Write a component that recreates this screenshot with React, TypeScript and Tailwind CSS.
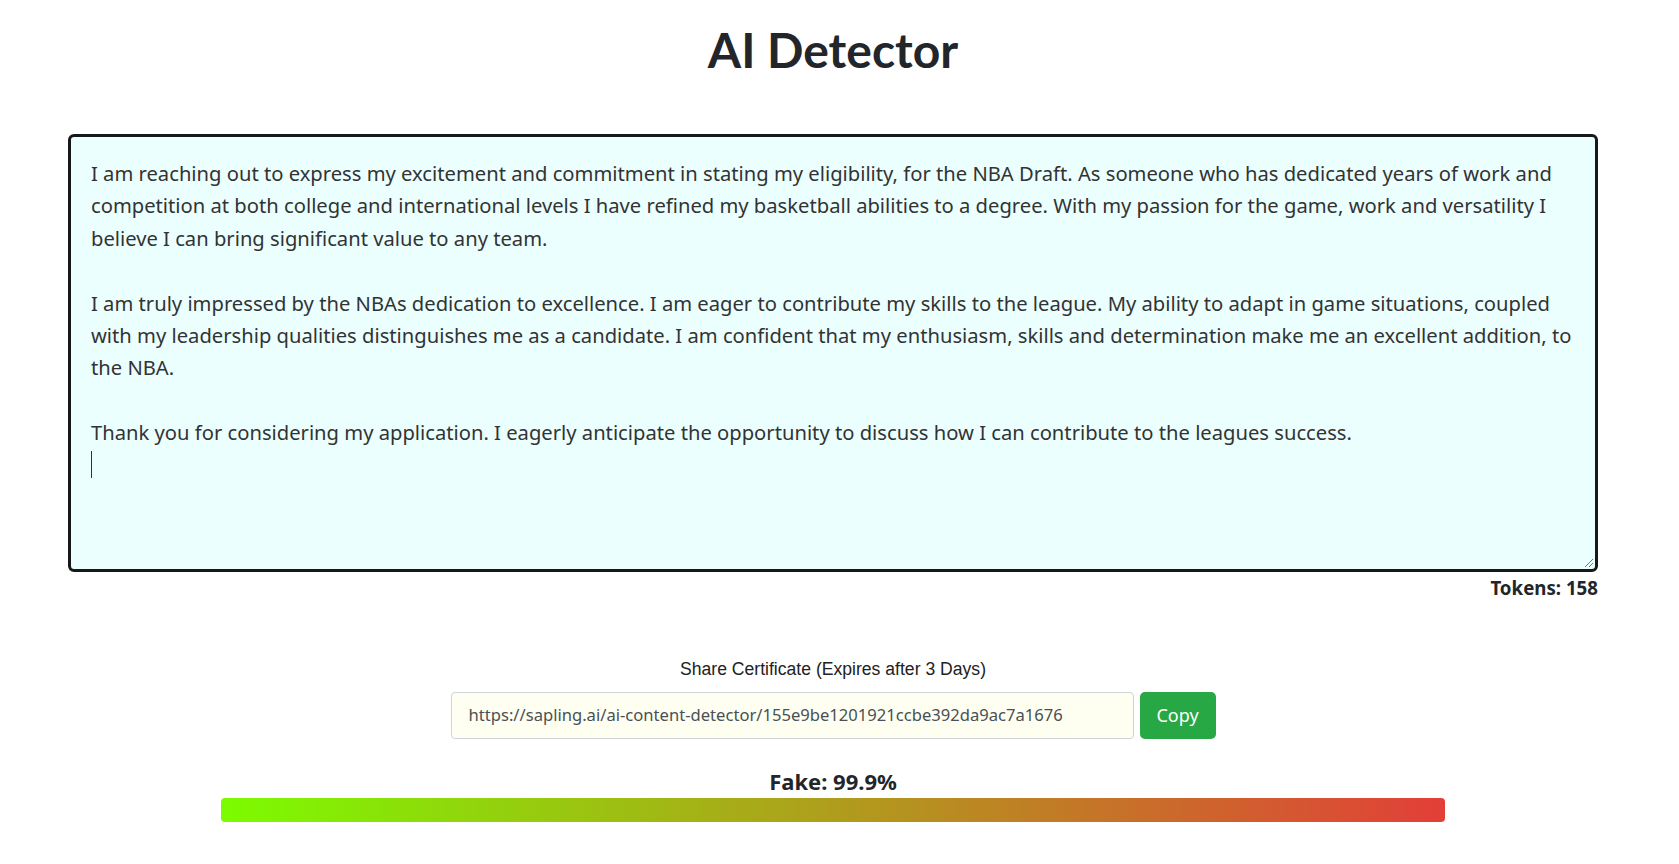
const lines = [
  "I am reaching out to express my excitement and commitment in stating my eligibility, for the NBA Draft. As someone who has dedicated years of work and",
  "competition at both college and international levels I have refined my basketball abilities to a degree. With my passion for the game, work and versatility I",
  "believe I can bring significant value to any team.",
  "",
  "I am truly impressed by the NBAs dedication to excellence. I am eager to contribute my skills to the league. My ability to adapt in game situations, coupled",
  "with my leadership qualities distinguishes me as a candidate. I am confident that my enthusiasm, skills and determination make me an excellent addition, to",
  "the NBA.",
  "",
  "Thank you for considering my application. I eagerly anticipate the opportunity to discuss how I can contribute to the leagues success.",
]

const App = () => {
  return (
    <div className="w-[1666px] bg-white text-[#212529] font-['Noto_Sans',sans-serif]">
      {/* Title */}
      <h1 className="pt-[22px] text-center text-[48px] leading-[56px] font-bold font-['Lato',sans-serif] text-[#22262a]">
        AI Detector
      </h1>

      {/* Text box */}
      <div className="mx-[68px] mt-[56px]">
        <div className="relative h-[438px] rounded-[6px] border-[3px] border-[#16181a] bg-[#ebffff] px-[20px] py-[20px]">
          <div className="whitespace-pre text-[20.2px] leading-[32.4px] text-[#333]">
            {lines.map((line, i) => (
              <div key={i} className="h-[32.4px]">{line}</div>
            ))}
            <div className="h-[32.4px] flex items-center">
              <span className="block w-px h-[27px] bg-[#333]"></span>
            </div>
          </div>
          {/* resize grip */}
          <svg className="absolute right-[1px] bottom-[1px]" width="12" height="12" viewBox="0 0 12 12">
            <path d="M11 3 L3 11 M11 7 L7 11" stroke="#777" strokeWidth="1" fill="none" />
          </svg>
        </div>
        <div className="mt-[4px] text-right text-[18.7px] leading-[24px] font-bold text-[#22262a]">
          Tokens: 158
        </div>
      </div>

      {/* Share certificate */}
      <div className="mt-[57px] flex flex-col items-center">
        <div className="text-[17.6px] leading-[24px] font-['Liberation_Sans',Arial,sans-serif] text-[#222]">
          Share Certificate (Expires after 3 Days)
        </div>
        <div className="mt-[11px] flex gap-[6px]">
          <div className="w-[683px] h-[47px] flex items-center rounded-[4px] border border-[#ced4da] bg-[#fefff0] px-[17px] text-[16.6px] text-[#495057]">
            https://sapling.ai/ai-content-detector/155e9be1201921ccbe392da9ac7a1676
          </div>
          <button className="w-[76px] h-[47px] rounded-[5px] bg-[#28a745] text-white text-[18px]">
            Copy
          </button>
        </div>
      </div>

      {/* Result */}
      <div className="mt-[28px] flex flex-col items-center">
        <div className="text-[22px] leading-[28px] font-bold text-[#22262a]">Fake: 99.9%</div>
        <div className="mt-[3px] w-[1224px] h-[24px] rounded-[4px] bg-linear-to-r/srgb from-[#7cfc00] to-[#e23f38]"></div>
      </div>
    </div>
  )
}

export default App
